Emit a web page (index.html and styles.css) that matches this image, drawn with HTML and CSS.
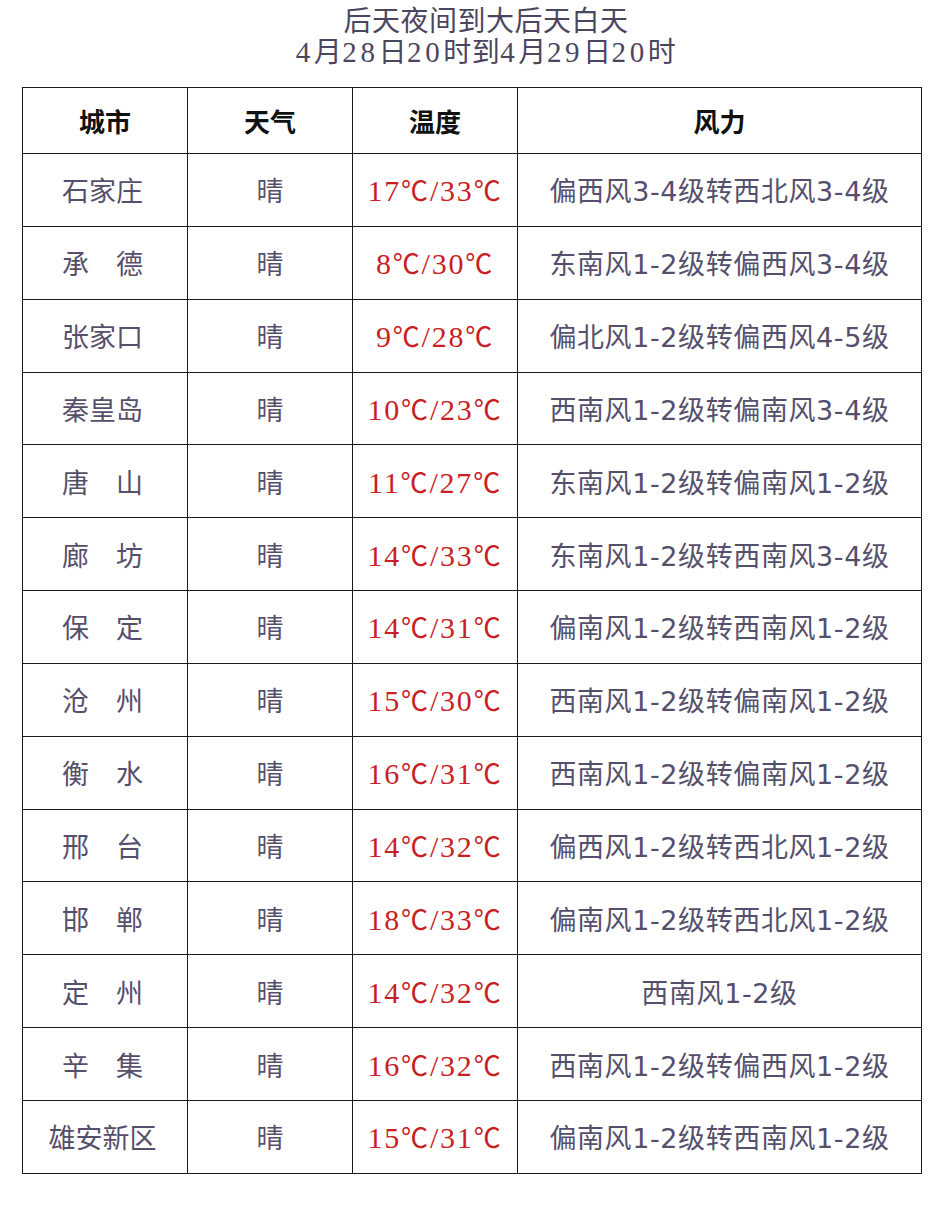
FILE: index.html
```html
<!DOCTYPE html>
<html lang="zh">
<head>
<meta charset="utf-8">
<link rel="stylesheet" href="styles.css">
</head>
<body>
<div class="page">
  <h1 class="title"><span class="line">后天夜间到大后天白天</span><span class="line"><span class="n">4</span>月<span class="n">28</span>日<span class="n">20</span>时到<span class="n">4</span>月<span class="n">29</span>日<span class="n">20</span>时</span></h1>
  <table class="forecast">
    <thead>
      <tr><th class="c-city">城市</th><th class="c-wx">天气</th><th class="c-temp">温度</th><th class="c-wind">风力</th></tr>
    </thead>
    <tbody>
      <tr><td class="city">石家庄</td><td>晴</td><td class="temp">17<span class="deg">℃</span>/33<span class="deg">℃</span></td><td class="wind">偏西风3-4级转西北风3-4级</td></tr>
      <tr><td class="city">承　德</td><td>晴</td><td class="temp">8<span class="deg">℃</span>/30<span class="deg">℃</span></td><td class="wind">东南风1-2级转偏西风3-4级</td></tr>
      <tr><td class="city">张家口</td><td>晴</td><td class="temp">9<span class="deg">℃</span>/28<span class="deg">℃</span></td><td class="wind">偏北风1-2级转偏西风4-5级</td></tr>
      <tr><td class="city">秦皇岛</td><td>晴</td><td class="temp">10<span class="deg">℃</span>/23<span class="deg">℃</span></td><td class="wind">西南风1-2级转偏南风3-4级</td></tr>
      <tr><td class="city">唐　山</td><td>晴</td><td class="temp">11<span class="deg">℃</span>/27<span class="deg">℃</span></td><td class="wind">东南风1-2级转偏南风1-2级</td></tr>
      <tr><td class="city">廊　坊</td><td>晴</td><td class="temp">14<span class="deg">℃</span>/33<span class="deg">℃</span></td><td class="wind">东南风1-2级转西南风3-4级</td></tr>
      <tr><td class="city">保　定</td><td>晴</td><td class="temp">14<span class="deg">℃</span>/31<span class="deg">℃</span></td><td class="wind">偏南风1-2级转西南风1-2级</td></tr>
      <tr><td class="city">沧　州</td><td>晴</td><td class="temp">15<span class="deg">℃</span>/30<span class="deg">℃</span></td><td class="wind">西南风1-2级转偏南风1-2级</td></tr>
      <tr><td class="city">衡　水</td><td>晴</td><td class="temp">16<span class="deg">℃</span>/31<span class="deg">℃</span></td><td class="wind">西南风1-2级转偏南风1-2级</td></tr>
      <tr><td class="city">邢　台</td><td>晴</td><td class="temp">14<span class="deg">℃</span>/32<span class="deg">℃</span></td><td class="wind">偏西风1-2级转西北风1-2级</td></tr>
      <tr><td class="city">邯　郸</td><td>晴</td><td class="temp">18<span class="deg">℃</span>/33<span class="deg">℃</span></td><td class="wind">偏南风1-2级转西北风1-2级</td></tr>
      <tr><td class="city">定　州</td><td>晴</td><td class="temp">14<span class="deg">℃</span>/32<span class="deg">℃</span></td><td class="wind">西南风1-2级</td></tr>
      <tr><td class="city">辛　集</td><td>晴</td><td class="temp">16<span class="deg">℃</span>/32<span class="deg">℃</span></td><td class="wind">西南风1-2级转偏西风1-2级</td></tr>
      <tr><td class="city">雄安新区</td><td>晴</td><td class="temp">15<span class="deg">℃</span>/31<span class="deg">℃</span></td><td class="wind">偏南风1-2级转西南风1-2级</td></tr>
    </tbody>
  </table>
</div>
</body>
</html>
```

FILE: styles.css
```css
html, body {
  margin: 0;
  padding: 0;
  background: #ffffff;
}
.page {
  width: 942px;
  height: 1218px;
  padding-top: 7px;
  box-sizing: border-box;
}
.title {
  margin: 0 0 20px 0;
  padding-left: 30px;
  text-align: center;
  font-family: "Liberation Serif", "Noto Sans CJK SC", serif;
  font-weight: normal;
  font-size: 28px;
  letter-spacing: 0.5px;
  line-height: 30px;
  color: #4b4660;
}
.title .line {
  display: block;
  height: 30px;
}
.title .n {
  font-size: 29px;
  letter-spacing: 3.6px;
}
.forecast {
  margin-left: 22px;
  width: 900px;
  border-collapse: collapse;
  table-layout: fixed;
}
.forecast th, .forecast td {
  border: 1px solid #1a1a1a;
  text-align: center;
  padding: 0;
}
.forecast th {
  height: 65px;
  font-family: "Noto Sans CJK SC", sans-serif;
  font-weight: bold;
  font-size: 26px;
  color: #111111;
}
.c-city, .c-wx, .c-temp { width: 164px; }
.forecast td {
  height: 71.85px;
  font-family: "Noto Sans CJK SC", sans-serif;
  font-size: 27px;
  color: #564f6b;
}
.forecast td.city {
  padding-right: 5px;
}
.forecast td.temp {
  font-family: "Liberation Serif", serif;
  font-size: 30px;
  letter-spacing: 1.8px;
  color: #c81e24;
  white-space: nowrap;
}
.forecast td.temp .deg {
  font-family: "Noto Sans CJK SC", sans-serif;
  font-size: 27px;
}
.forecast td.wind {
  font-family: "DejaVu Sans", "Noto Sans CJK SC", sans-serif;
  letter-spacing: 0.6px;
  white-space: nowrap;
}
```
